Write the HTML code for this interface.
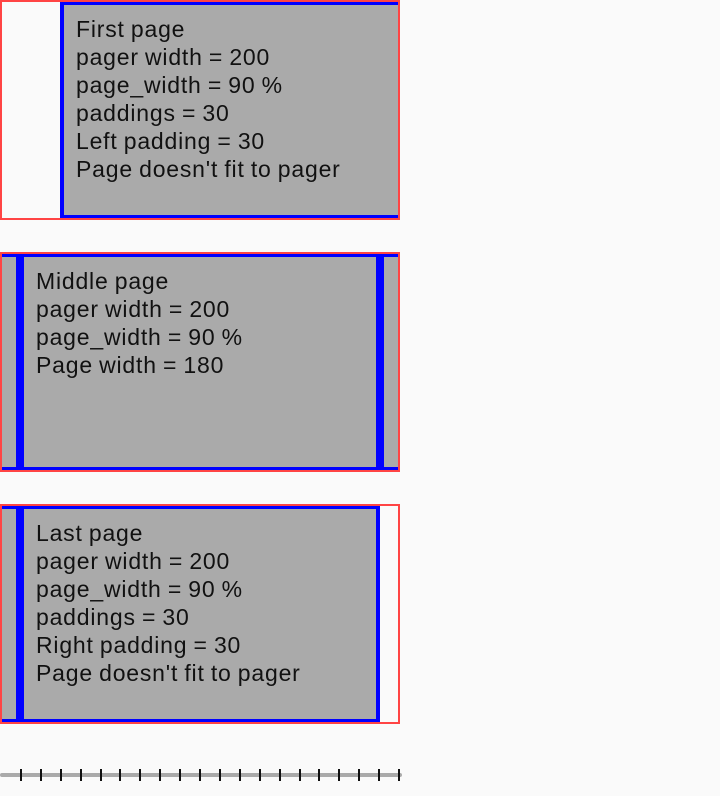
<!DOCTYPE html>
<html><head><style>
body{margin:0;background:#fafafa;width:720px;height:796px;position:relative;overflow:hidden;font-family:"Liberation Sans",sans-serif;}
.pager{position:absolute;left:0;width:396px;height:216px;border:2px solid #f44;overflow:hidden;}
.g{position:absolute;background:#aaa;}
.b{position:absolute;background:#00f;}
.t{position:absolute;font-size:23px;letter-spacing:0.8px;word-spacing:-1px;line-height:28px;color:#111;white-space:nowrap;}
</style></head><body>
<div class="pager" style="top:0">
  <div class="g" style="left:58px;top:0;width:340px;height:216px;border:3px solid #00f;border-left-width:4px;border-right:none;box-sizing:border-box"></div>
  <div class="t" style="left:74px;top:13px">First page<br>pager width = 200<br>page_width = 90 %<br>paddings = 30<br>Left padding = 30<br>Page doesn't fit to pager</div>
</div>
<div class="pager" style="top:252px">
  <div class="g" style="left:0;top:0;width:400px;height:216px;border-top:3px solid #00f;border-bottom:3px solid #00f;box-sizing:border-box"></div>
  <div class="b" style="left:14px;top:0;width:8px;height:216px"></div>
  <div class="b" style="left:374px;top:0;width:8px;height:216px"></div>
  <div class="t" style="left:34px;top:13px">Middle page<br>pager width = 200<br>page_width = 90 %<br>Page width = 180</div>
</div>
<div class="pager" style="top:504px">
  <div class="g" style="left:0;top:0;width:378px;height:216px;border-top:3px solid #00f;border-bottom:3px solid #00f;border-right:4px solid #00f;box-sizing:border-box"></div>
  <div class="b" style="left:14px;top:0;width:8px;height:216px"></div>
  <div class="t" style="left:34px;top:13px">Last page<br>pager width = 200<br>page_width = 90 %<br>paddings = 30<br>Right padding = 30<br>Page doesn't fit to pager</div>
</div>
<svg style="position:absolute;left:0;top:760px" width="410" height="30">
<line x1="2" y1="15" x2="400" y2="15" stroke="#aaa" stroke-width="4" stroke-linecap="round"/>
<g stroke="#111" stroke-width="2">
<path d="M21 9v12M41 9v12M61 9v12M81 9v12M101 9v12M120 9v12M140 9v12M160 9v12M180 9v12M200 9v12M220 9v12M240 9v12M260 9v12M280 9v12M300 9v12M319 9v12M339 9v12M359 9v12M379 9v12M399 9v12"/>
</g></svg>
</body></html>
